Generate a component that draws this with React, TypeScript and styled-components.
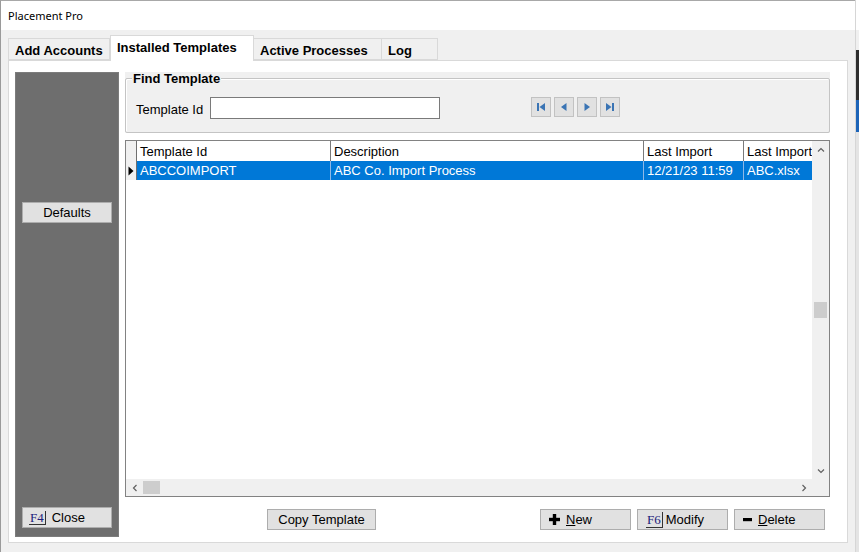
import React from 'react';
import styled, { createGlobalStyle } from 'styled-components';

/* ───────────── global ───────────── */
const GlobalStyle = createGlobalStyle`
  html, body {
    margin: 0;
    padding: 0;
    background: #f0f0f0;
  }
  body {
    font-family: "Liberation Sans", Arial, sans-serif;
    font-size: 13px;
    color: #000;
  }
  * {
    box-sizing: border-box;
  }
`;

/* ───────────── window frame ───────────── */
const Screen = styled.div`
  width: 859px;
  height: 552px;
  display: flex;
  overflow: hidden;
`;

const Window = styled.div`
  flex: 1;
  display: flex;
  flex-direction: column;
  border-left: 1px solid #9a9a9a;
  border-top: 1px solid #a8a8a8;
  background: #f0f0f0;
`;

const DesktopEdge = styled.div`
  width: 4px;
  background: linear-gradient(
    to bottom,
    #ffffff 0 30px,
    #f0f0f0 30px 50px,
    #2d2d2d 50px 100px,
    #1c64b8 100px 132px,
    #e4e4e4 132px
  );
  border-left: 1px solid #d6d6d6;
`;

const TitleBar = styled.div`
  height: 29px;
  flex: none;
  background: #fff;
  display: flex;
  align-items: center;
  padding-left: 7px;
  font-family: "Noto Sans", "Open Sans", sans-serif;
  font-size: 11px;
`;

const Body = styled.div`
  flex: 1;
  display: flex;
  flex-direction: column;
  padding: 5px 0 9px 7px;
`;

/* ───────────── tabs ───────────── */
const TabStrip = styled.div`
  height: 25px;
  display: flex;
  align-items: flex-end;
`;

const Tab = styled.div<{ $w: number; $active?: boolean }>`
  width: ${(p) => p.$w}px;
  height: ${(p) => (p.$active ? 26 : 22)}px;
  margin-bottom: ${(p) => (p.$active ? -1 : 0)}px;
  position: relative;
  z-index: ${(p) => (p.$active ? 1 : 0)};
  background: ${(p) => (p.$active ? '#fff' : '#f0f0f0')};
  border: 1px solid #d9d9d9;
  border-bottom: ${(p) => (p.$active ? 'none' : '1px solid #d9d9d9')};
  border-left: ${(p) => (p.$active ? '1px solid #d9d9d9' : 'none')};
  font-weight: bold;
  font-size: 13px;
  padding: 4px 0 0 6px;
  white-space: nowrap;

  &:first-child {
    border-left: 1px solid #d9d9d9;
  }
`;

const Panel = styled.div`
  width: 840px;
  flex: 1;
  background: #fff;
  border: 1px solid #d9d9d9;
  display: flex;
  gap: 6px;
  padding: 11px 17px 5px 6px;
`;

/* ───────────── sidebar ───────────── */
const Sidebar = styled.div`
  width: 104px;
  background: #6e6e6e;
  border: 1px solid #7c7c7c;
  display: flex;
  flex-direction: column;
  padding: 0 6px 8px 6px;
`;

const Button = styled.button<{ $w?: number; $align?: 'left' | 'center' }>`
  width: ${(p) => (p.$w ? `${p.$w}px` : '100%')};
  height: 21px;
  background: #e1e1e1;
  border: 1px solid #adadad;
  border-radius: 0;
  font-family: "Liberation Sans", Arial, sans-serif;
  font-size: 13px;
  color: #000;
  display: flex;
  align-items: center;
  justify-content: ${(p) => (p.$align === 'left' ? 'flex-start' : 'center')};
  padding: 0 0 0 ${(p) => (p.$align === 'left' ? 6 : 0)}px;
  gap: 3px;
`;

const SideButton = styled(Button)<{ $top?: number }>`
  margin-top: ${(p) => (p.$top !== undefined ? `${p.$top}px` : 'auto')};
`;

const KeyCap = styled.span`
  font-family: "Liberation Serif", "Times New Roman", serif;
  font-size: 13px;
  line-height: 13px;
  color: #20207a;
  border-right: 1px solid #333;
  border-bottom: 1px solid #333;
  padding: 0 1px 0 1px;
  margin-right: 3px;
`;

const Underline = styled.span`
  text-decoration: underline;
`;

/* ───────────── main column ───────────── */
const Main = styled.div`
  width: 705px;
  display: flex;
  flex-direction: column;
`;

const FindArea = styled.div`
  height: 61px;
  background: #f0f0f0;
`;

const GroupBox = styled.fieldset`
  margin: 0;
  height: 61px;
  border: 1px solid #c4c4c4;
  border-radius: 2px;
  padding: 12px 0 0 10px;
  display: flex;
  align-items: flex-start;
  box-shadow: inset 1px 1px 0 #fff;
`;

const Legend = styled.legend`
  font-weight: bold;
  font-size: 13px;
  line-height: 13px;
  padding: 0 1px;
  margin-left: -4px;
  background: #f0f0f0;
`;

const FindRow = styled.div`
  display: flex;
  align-items: center;
  height: 22px;
`;

const FieldLabel = styled.label`
  font-size: 13px;
  margin: 3px 7px 0 0;
`;

const TextInput = styled.input`
  width: 230px;
  height: 22px;
  border: 1px solid #7a7a7a;
  background: #fff;
  padding: 0 3px;
  font: inherit;
`;

const NavGroup = styled.div`
  display: flex;
  gap: 3px;
  margin-left: 91px;
  margin-top: -2px;
`;

const NavButton = styled.button`
  width: 20px;
  height: 20px;
  padding: 0;
  background: #e1e1e1;
  border: 1px solid #c2c2c2;
  display: flex;
  align-items: center;
  justify-content: center;
`;

/* ───────────── data grid ───────────── */
const GridFrame = styled.div`
  margin-top: 7px;
  height: 357px;
  border: 1px solid #828282;
  display: grid;
  grid-template-columns: 1fr 17px;
  grid-template-rows: 1fr 17px;
  background: #fff;
`;

const TableArea = styled.div`
  overflow: hidden;
  display: flex;
  flex-direction: column;
`;

const Row = styled.div<{ $selected?: boolean }>`
  display: flex;
  height: ${(p) => (p.$selected ? 19 : 20)}px;
  background: ${(p) => (p.$selected ? '#0078d7' : '#fff')};
  color: ${(p) => (p.$selected ? '#fff' : '#000')};
`;

const Indicator = styled.div`
  width: 11px;
  flex: none;
  background: #f0f0f0;
  border-right: 1px solid #6f6f6f;
  display: flex;
  align-items: center;
  justify-content: center;
`;

const Cell = styled.div<{ $w: number; $sep: string }>`
  width: ${(p) => p.$w}px;
  flex: none;
  border-right: 1px solid ${(p) => p.$sep};
  padding: 0 0 0 3px;
  display: flex;
  align-items: center;
  white-space: nowrap;
  overflow: hidden;
  font-size: 13px;

  &:last-child {
    border-right: none;
  }
`;

const VScroll = styled.div`
  background: #f0f0f0;
  display: flex;
  flex-direction: column;
`;

const HScroll = styled.div`
  background: #f0f0f0;
  display: flex;
  align-items: center;
`;

const Corner = styled.div`
  background: #f0f0f0;
`;

const ArrowBox = styled.div`
  width: 17px;
  height: 17px;
  flex: none;
  display: flex;
  align-items: center;
  justify-content: center;
`;

const VThumb = styled.div`
  width: 13px;
  height: 16px;
  margin: 144px 0 0 2px;
  background: #cdcdcd;
`;

const HThumb = styled.div`
  width: 17px;
  height: 13px;
  background: #cdcdcd;
`;

const Spacer = styled.div`
  flex: 1;
`;

/* ───────────── footer buttons ───────────── */
const ButtonRow = styled.div`
  margin-top: 12px;
  display: flex;
  align-items: center;
  gap: 6px;
  padding-right: 5px;
`;

const CopyButton = styled(Button)`
  margin-left: 142px;
  margin-right: auto;
`;

const ActionButton = styled(Button)`
  padding-left: 8px;
  gap: 6px;
`;

/* ───────────── icons ───────────── */
const Chevron: React.FC<{ dir: 'up' | 'down' | 'left' | 'right' }> = ({ dir }) => {
  const rot = { up: 0, right: 90, down: 180, left: 270 }[dir];
  return (
    <svg width="8" height="8" viewBox="0 0 8 8" style={{ transform: `rotate(${rot}deg)` }}>
      <path d="M1 5.5 L4 2.5 L7 5.5" fill="none" stroke="#606060" strokeWidth="1.2" />
    </svg>
  );
};

const NavIcon: React.FC<{ kind: 'first' | 'prev' | 'next' | 'last' }> = ({ kind }) => {
  const c = '#3a74b4';
  return (
    <svg width="10" height="10" viewBox="0 0 10 10">
      {kind === 'first' && (
        <>
          <rect x="1" y="1" width="2" height="8" fill={c} />
          <path d="M9 1 L3.5 5 L9 9 Z" fill={c} />
        </>
      )}
      {kind === 'prev' && <path d="M7.5 1 L2 5 L7.5 9 Z" fill={c} />}
      {kind === 'next' && <path d="M2.5 1 L8 5 L2.5 9 Z" fill={c} />}
      {kind === 'last' && (
        <>
          <path d="M1 1 L6.5 5 L1 9 Z" fill={c} />
          <rect x="7" y="1" width="2" height="8" fill={c} />
        </>
      )}
    </svg>
  );
};

const RowPointer = () => (
  <svg width="6" height="10" viewBox="0 0 6 10">
    <path d="M0.5 0.5 L5.5 5 L0.5 9.5 Z" fill="#000" />
  </svg>
);

const PlusIcon = () => (
  <svg width="11" height="11" viewBox="0 0 11 11">
    <rect x="3.8" y="0" width="3.4" height="11" fill="#000" />
    <rect x="0" y="3.8" width="11" height="3.4" fill="#000" />
  </svg>
);

const MinusIcon = () => (
  <svg width="9" height="11" viewBox="0 0 9 11">
    <rect x="0" y="4" width="9" height="3.2" fill="#000" />
  </svg>
);

/* ───────────── data ───────────── */
const columns = [
  { title: 'Template Id', width: 194 },
  { title: 'Description', width: 313 },
  { title: 'Last Import', width: 100 },
  { title: 'Last Import', width: 68 },
];

const rows = [['ABCCOIMPORT', 'ABC Co. Import Process', '12/21/23 11:59', 'ABC.xlsx']];

const tabs = [
  { label: 'Add Accounts', width: 102 },
  { label: 'Installed Templates', width: 144, active: true },
  { label: 'Active Processes', width: 128 },
  { label: 'Log', width: 56 },
];

/* ───────────── component ───────────── */
const App: React.FC = () => (
  <>
    <GlobalStyle />
    <Screen>
      <Window>
        <TitleBar>Placement Pro</TitleBar>
        <Body>
          <TabStrip>
            {tabs.map((t) => (
              <Tab key={t.label} $w={t.width} $active={t.active}>
                {t.label}
              </Tab>
            ))}
          </TabStrip>

          <Panel>
            <Sidebar>
              <SideButton $top={129}>Defaults</SideButton>
              <SideButton $align="left">
                <KeyCap>F4</KeyCap>Close
              </SideButton>
            </Sidebar>

            <Main>
              <FindArea>
                <GroupBox>
                  <Legend>Find Template</Legend>
                  <FindRow>
                    <FieldLabel>Template Id</FieldLabel>
                    <TextInput />
                    <NavGroup>
                      <NavButton><NavIcon kind="first" /></NavButton>
                      <NavButton><NavIcon kind="prev" /></NavButton>
                      <NavButton><NavIcon kind="next" /></NavButton>
                      <NavButton><NavIcon kind="last" /></NavButton>
                    </NavGroup>
                  </FindRow>
                </GroupBox>
              </FindArea>

              <GridFrame>
                <TableArea>
                  <Row>
                    <Indicator />
                    {columns.map((c, i) => (
                      <Cell key={i} $w={c.width} $sep="#7a7a7a">
                        {c.title}
                      </Cell>
                    ))}
                  </Row>
                  {rows.map((r, ri) => (
                    <Row key={ri} $selected>
                      <Indicator>
                        <RowPointer />
                      </Indicator>
                      {r.map((v, i) => (
                        <Cell key={i} $w={columns[i].width} $sep="#8fb8e6">
                          {v}
                        </Cell>
                      ))}
                    </Row>
                  ))}
                </TableArea>
                <VScroll>
                  <ArrowBox><Chevron dir="up" /></ArrowBox>
                  <VThumb />
                  <Spacer />
                  <ArrowBox><Chevron dir="down" /></ArrowBox>
                </VScroll>
                <HScroll>
                  <ArrowBox><Chevron dir="left" /></ArrowBox>
                  <HThumb />
                  <Spacer />
                  <ArrowBox><Chevron dir="right" /></ArrowBox>
                </HScroll>
                <Corner />
              </GridFrame>

              <ButtonRow>
                <CopyButton $w={109}>Copy Template</CopyButton>
                <ActionButton $w={91} $align="left">
                  <PlusIcon />
                  <span><Underline>N</Underline>ew</span>
                </ActionButton>
                <ActionButton $w={91} $align="left">
                  <span><KeyCap>F6</KeyCap>Modify</span>
                </ActionButton>
                <ActionButton $w={91} $align="left">
                  <MinusIcon />
                  <span><Underline>D</Underline>elete</span>
                </ActionButton>
              </ButtonRow>
            </Main>
          </Panel>
        </Body>
      </Window>
      <DesktopEdge />
    </Screen>
  </>
);

export default App;
